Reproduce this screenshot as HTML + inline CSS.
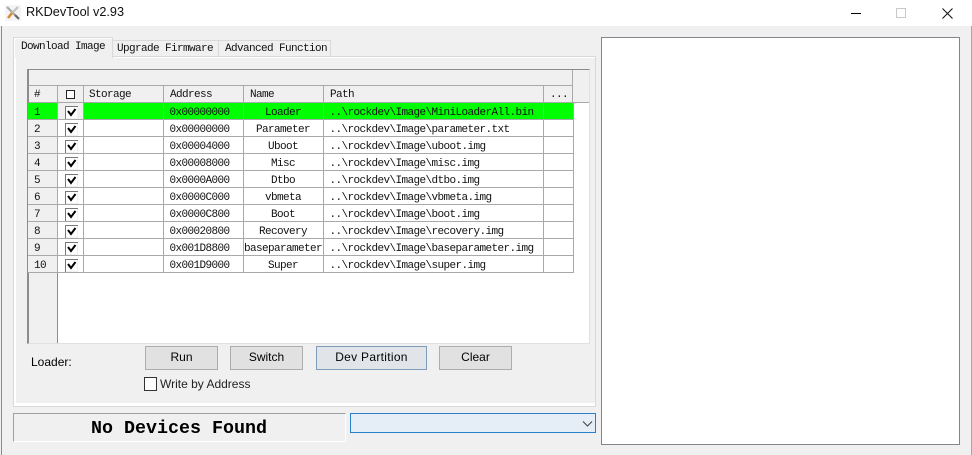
<!DOCTYPE html>
<html><head><meta charset="utf-8"><style>
html,body{margin:0;padding:0}
body{width:972px;height:455px;overflow:hidden;position:relative;background:#f0f0f0;font-family:"Liberation Sans",sans-serif;color:#000}
.a{position:absolute;box-sizing:border-box}
.m{position:absolute;font:11px/17px "Liberation Mono",monospace;letter-spacing:-.6px;white-space:pre;color:#111}
.btn{position:absolute;top:346px;height:24px;background:#e1e1e1;border:1px solid #adadad;box-sizing:border-box;font:12px/21px "Liberation Sans",sans-serif;text-align:center;color:#000}
table{position:absolute;left:28px;top:103px;border-collapse:collapse;table-layout:fixed;width:545px}
td{height:12px;padding:4px 0 0;border-right:1px solid #a9a9a9;border-bottom:1px solid #a9a9a9;font:11px/12px "Liberation Mono",monospace;letter-spacing:-.6px;white-space:pre;box-sizing:content-box;overflow:hidden;background:#fff;color:#111}
td.n{background:#f0f0f0;padding-left:6px;box-sizing:content-box;font-size:11px}
td.c{position:relative}
td.c svg{position:absolute;left:7px;top:3px}
td.d{padding-left:6px}
td.e{text-align:center}
tr.g td:not(.c){background:#00ff00}
tr.g td.c{background:#f0f0f0}
</style></head><body>
<div class="a" style="left:0;top:0;width:972px;height:26px;background:#fff"></div>
<div class="a" style="left:1px;top:26px;width:1px;height:429px;background:#8c8c8c"></div>
<div class="a" style="left:971px;top:26px;width:1px;height:429px;background:#a8a8a8"></div>
<svg class="a" style="left:5px;top:5px" width="16" height="16" viewBox="0 0 16 16"><rect width="16" height="16" fill="#f4f4f4"/><path d="M2 2L13 13" stroke="#a8a8a8" stroke-width="2.2"/><path d="M13 2L6 9" stroke="#c4c0ba" stroke-width="2"/><path d="M7 8L3 13" stroke="#d98a2e" stroke-width="2.6"/><path d="M10 10L14 14" stroke="#666" stroke-width="2"/></svg>
<div class="a" style="left:26px;top:4px;font:12.7px/17px 'Liberation Sans',sans-serif;color:#111;white-space:pre">RKDevTool v2.93</div>
<div class="a" style="left:851px;top:13px;width:10px;height:1px;background:#000"></div>
<div class="a" style="left:896px;top:8px;width:10px;height:10px;border:1px solid #c8c8c8"></div>
<svg class="a" style="left:942px;top:8px" width="11" height="11" viewBox="0 0 11 11"><path d="M0.5 0.5L10.5 10.5M10.5 0.5L0.5 10.5" stroke="#111" stroke-width="1.05" fill="none"/></svg>

<div class="a" style="left:13px;top:56px;width:583px;height:351px;border:1px solid #d9d9d9;background:#f0f0f0"></div>
<div class="a" style="left:14px;top:57px;width:2px;height:349px;background:#fff"></div>
<div class="a" style="left:14px;top:403px;width:581px;height:3px;background:#fff"></div>
<div class="a" style="left:14px;top:57px;width:581px;height:1px;background:#fff"></div>

<div class="a" style="left:13px;top:37px;width:100px;height:21px;background:#f0f0f0;border:1px solid #d9d9d9;border-bottom:0;box-shadow:inset 1px 1px 0 #fff"></div>
<div class="a" style="left:113px;top:40px;width:106px;height:17px;border:1px solid #d9d9d9;border-left:0;border-bottom:0"></div>
<div class="a" style="left:219px;top:40px;width:112px;height:17px;border:1px solid #d9d9d9;border-left:0;border-bottom:0"></div>
<div class="m" style="left:21px;top:39px">Download Image</div>
<div class="m" style="left:117px;top:41px">Upgrade Firmware</div>
<div class="m" style="left:225px;top:41px">Advanced Function</div>

<div class="a" style="left:27px;top:69px;width:563px;height:275px;background:#fff;border-style:solid;border-color:#8c8c8c #e0e0e0 #e0e0e0 #8c8c8c;border-width:1px 1px 1px 2px"></div>
<div class="a" style="left:29px;top:70px;width:544px;height:16px;background:#f0f0f0;border-bottom:1px solid #a9a9a9;border-right:1px solid #a9a9a9"></div>
<div class="a" style="left:573px;top:70px;width:16px;height:16px;background:#f0f0f0"></div>
<div class="a" style="left:29px;top:86px;width:560px;height:17px;background:#f0f0f0;border-bottom:1px solid #a9a9a9"></div>
<div class="a" style="left:57px;top:86px;width:1px;height:17px;background:#a9a9a9"></div>
<div class="a" style="left:83px;top:86px;width:1px;height:17px;background:#a9a9a9"></div>
<div class="a" style="left:163px;top:86px;width:1px;height:17px;background:#a9a9a9"></div>
<div class="a" style="left:243px;top:86px;width:1px;height:17px;background:#a9a9a9"></div>
<div class="a" style="left:323px;top:86px;width:1px;height:17px;background:#a9a9a9"></div>
<div class="a" style="left:543px;top:86px;width:1px;height:17px;background:#a9a9a9"></div>
<div class="a" style="left:572px;top:86px;width:1px;height:17px;background:#a9a9a9"></div>
<div class="m" style="left:34px;top:87px">#</div>
<div class="a" style="left:66px;top:90px;width:9px;height:9px;border:1px solid #222;background:#fff"></div>
<div class="m" style="left:89px;top:87px">Storage</div>
<div class="m" style="left:170px;top:87px">Address</div>
<div class="m" style="left:250px;top:87px">Name</div>
<div class="m" style="left:330px;top:87px">Path</div>
<div class="m" style="left:550px;top:87px">...</div>
<div class="a" style="left:29px;top:273px;width:29px;height:70px;background:#f0f0f0;border-right:1px solid #8c8c8c"></div>

<table><colgroup><col style="width:29px"><col style="width:26px"><col style="width:80px"><col style="width:80px"><col style="width:80px"><col style="width:220px"><col style="width:30px"></colgroup>
<tr class="g"><td class="n">1</td><td class="c"><svg width="13" height="13" viewBox="0 0 13 13"><rect width="13" height="13" fill="#f0f0f0"/><path d="M0.5 13V0.5H13" stroke="#777" fill="none"/><rect x="1" y="1" width="11" height="11" fill="#fff"/><path d="M3 5L6 9L10.5 3" stroke="#000" stroke-width="2" fill="none"/></svg></td><td></td><td class="d">0x00000000</td><td class="e">Loader</td><td class="d">..\rockdev\Image\MiniLoaderAll.bin</td><td></td></tr>
<tr><td class="n">2</td><td class="c"><svg width="13" height="13" viewBox="0 0 13 13"><rect width="13" height="13" fill="#f0f0f0"/><path d="M0.5 13V0.5H13" stroke="#777" fill="none"/><rect x="1" y="1" width="11" height="11" fill="#fff"/><path d="M3 5L6 9L10.5 3" stroke="#000" stroke-width="2" fill="none"/></svg></td><td></td><td class="d">0x00000000</td><td class="e">Parameter</td><td class="d">..\rockdev\Image\parameter.txt</td><td></td></tr>
<tr><td class="n">3</td><td class="c"><svg width="13" height="13" viewBox="0 0 13 13"><rect width="13" height="13" fill="#f0f0f0"/><path d="M0.5 13V0.5H13" stroke="#777" fill="none"/><rect x="1" y="1" width="11" height="11" fill="#fff"/><path d="M3 5L6 9L10.5 3" stroke="#000" stroke-width="2" fill="none"/></svg></td><td></td><td class="d">0x00004000</td><td class="e">Uboot</td><td class="d">..\rockdev\Image\uboot.img</td><td></td></tr>
<tr><td class="n">4</td><td class="c"><svg width="13" height="13" viewBox="0 0 13 13"><rect width="13" height="13" fill="#f0f0f0"/><path d="M0.5 13V0.5H13" stroke="#777" fill="none"/><rect x="1" y="1" width="11" height="11" fill="#fff"/><path d="M3 5L6 9L10.5 3" stroke="#000" stroke-width="2" fill="none"/></svg></td><td></td><td class="d">0x00008000</td><td class="e">Misc</td><td class="d">..\rockdev\Image\misc.img</td><td></td></tr>
<tr><td class="n">5</td><td class="c"><svg width="13" height="13" viewBox="0 0 13 13"><rect width="13" height="13" fill="#f0f0f0"/><path d="M0.5 13V0.5H13" stroke="#777" fill="none"/><rect x="1" y="1" width="11" height="11" fill="#fff"/><path d="M3 5L6 9L10.5 3" stroke="#000" stroke-width="2" fill="none"/></svg></td><td></td><td class="d">0x0000A000</td><td class="e">Dtbo</td><td class="d">..\rockdev\Image\dtbo.img</td><td></td></tr>
<tr><td class="n">6</td><td class="c"><svg width="13" height="13" viewBox="0 0 13 13"><rect width="13" height="13" fill="#f0f0f0"/><path d="M0.5 13V0.5H13" stroke="#777" fill="none"/><rect x="1" y="1" width="11" height="11" fill="#fff"/><path d="M3 5L6 9L10.5 3" stroke="#000" stroke-width="2" fill="none"/></svg></td><td></td><td class="d">0x0000C000</td><td class="e">vbmeta</td><td class="d">..\rockdev\Image\vbmeta.img</td><td></td></tr>
<tr><td class="n">7</td><td class="c"><svg width="13" height="13" viewBox="0 0 13 13"><rect width="13" height="13" fill="#f0f0f0"/><path d="M0.5 13V0.5H13" stroke="#777" fill="none"/><rect x="1" y="1" width="11" height="11" fill="#fff"/><path d="M3 5L6 9L10.5 3" stroke="#000" stroke-width="2" fill="none"/></svg></td><td></td><td class="d">0x0000C800</td><td class="e">Boot</td><td class="d">..\rockdev\Image\boot.img</td><td></td></tr>
<tr><td class="n">8</td><td class="c"><svg width="13" height="13" viewBox="0 0 13 13"><rect width="13" height="13" fill="#f0f0f0"/><path d="M0.5 13V0.5H13" stroke="#777" fill="none"/><rect x="1" y="1" width="11" height="11" fill="#fff"/><path d="M3 5L6 9L10.5 3" stroke="#000" stroke-width="2" fill="none"/></svg></td><td></td><td class="d">0x00020800</td><td class="e">Recovery</td><td class="d">..\rockdev\Image\recovery.img</td><td></td></tr>
<tr><td class="n">9</td><td class="c"><svg width="13" height="13" viewBox="0 0 13 13"><rect width="13" height="13" fill="#f0f0f0"/><path d="M0.5 13V0.5H13" stroke="#777" fill="none"/><rect x="1" y="1" width="11" height="11" fill="#fff"/><path d="M3 5L6 9L10.5 3" stroke="#000" stroke-width="2" fill="none"/></svg></td><td></td><td class="d">0x001D8800</td><td class="e">baseparameter</td><td class="d">..\rockdev\Image\baseparameter.img</td><td></td></tr>
<tr><td class="n">10</td><td class="c"><svg width="13" height="13" viewBox="0 0 13 13"><rect width="13" height="13" fill="#f0f0f0"/><path d="M0.5 13V0.5H13" stroke="#777" fill="none"/><rect x="1" y="1" width="11" height="11" fill="#fff"/><path d="M3 5L6 9L10.5 3" stroke="#000" stroke-width="2" fill="none"/></svg></td><td></td><td class="d">0x001D9000</td><td class="e">Super</td><td class="d">..\rockdev\Image\super.img</td><td></td></tr>
</table>

<div class="a" style="left:31px;top:355px;font:12px/15px 'Liberation Sans',sans-serif">Loader:</div>
<div class="btn" style="left:145px;width:73px">Run</div>
<div class="btn" style="left:230px;width:73px">Switch</div>
<div class="btn" style="left:316px;width:111px;border-color:#7f9db9;background:#e1e4e8;letter-spacing:.3px">Dev Partition</div>
<div class="btn" style="left:439px;width:73px">Clear</div>
<div class="a" style="left:144px;top:377px;width:13px;height:14px;border:1px solid #333;background:#fff"></div>
<div class="a" style="left:160px;top:377px;font:12px/15px 'Liberation Sans',sans-serif;white-space:pre;color:#222">Write by Address</div>

<div class="a" style="left:13px;top:413px;width:333px;height:29px;border:1px solid;border-color:#a0a0a0 #fff #fff #a0a0a0"></div>
<div class="a" style="left:91px;top:418px;font:bold 18.33px/22px 'Liberation Mono',monospace;white-space:pre;color:#000">No Devices Found</div>
<div class="a" style="left:350px;top:413px;width:246px;height:20px;border:1px solid #2a7fcc;background:#e5eef6"></div>
<svg class="a" style="left:582px;top:420px" width="11" height="8" viewBox="0 0 11 8"><path d="M1 1.5L5.5 6L10 1.5" stroke="#444" stroke-width="1.1" fill="none"/></svg>
<div class="a" style="left:601px;top:37px;width:359px;height:408px;background:#fff;border:1px solid #84848c"></div>
</body></html>
